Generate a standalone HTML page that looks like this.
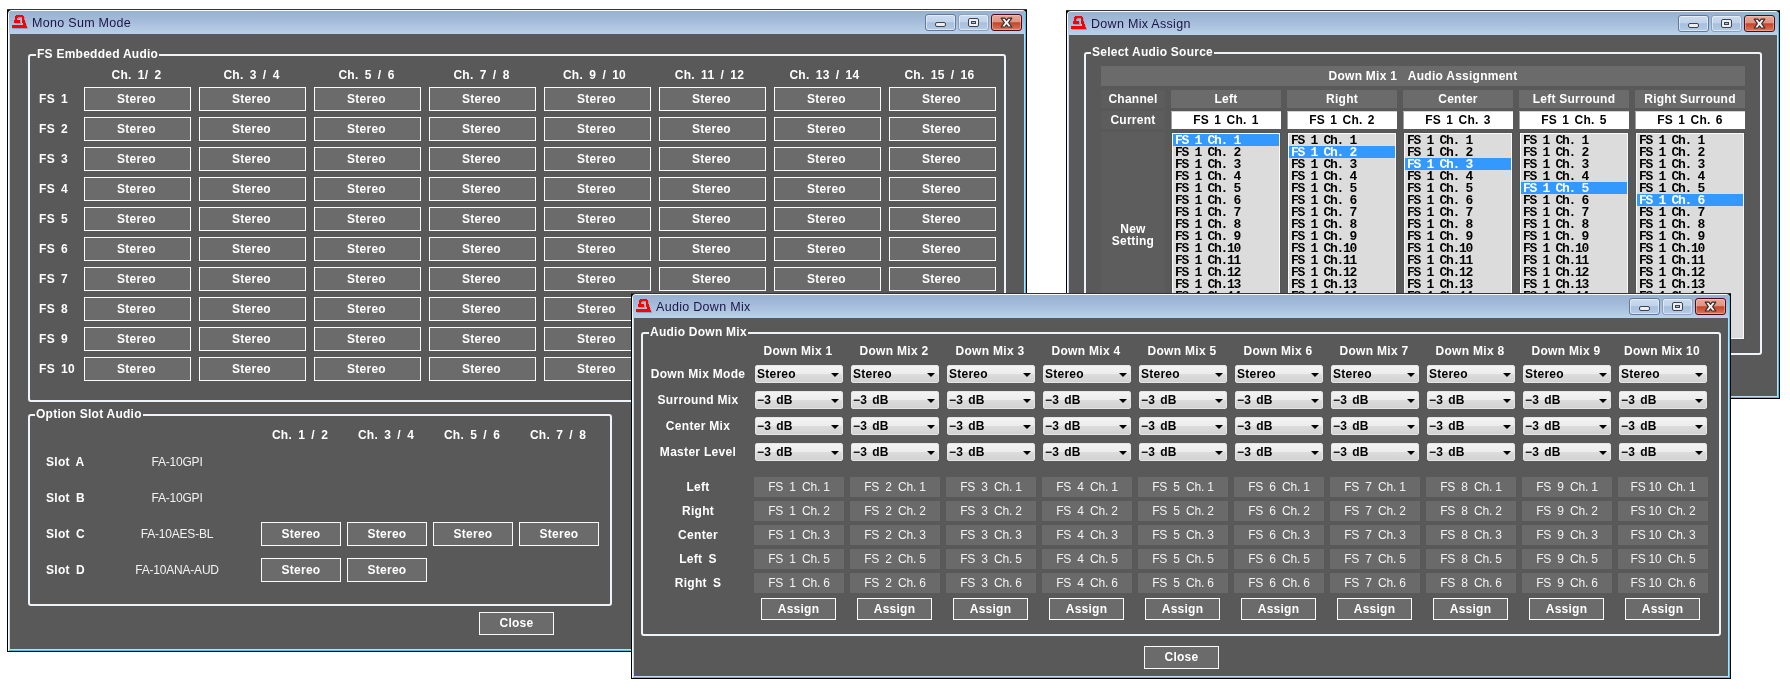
<!DOCTYPE html><html><head><meta charset="utf-8"><style>
html,body{margin:0;padding:0;background:#fff;}
body{width:1790px;height:689px;position:relative;overflow:hidden;font-family:"Liberation Sans",sans-serif;}
div,svg{position:absolute;box-sizing:border-box;}
.b{color:#fff;font-weight:bold;font-size:12px;line-height:14px;height:14px;white-space:nowrap;letter-spacing:0.25px}
.n{color:#f2f2f2;font-size:12px;line-height:14px;height:14px;white-space:nowrap;letter-spacing:-0.2px}
.k{color:#000;font-weight:bold;font-size:12px;line-height:14px;height:14px;white-space:nowrap;letter-spacing:0.25px}
.ch{word-spacing:2.5px;letter-spacing:0.3px}
.title{font-size:12.5px;color:#1c1448;white-space:nowrap;letter-spacing:0.3px;line-height:14px;height:14px}
.gl{background:#595959;color:#fff;font-weight:bold;font-size:12px;line-height:14px;height:14px;white-space:nowrap;padding:0 1px;letter-spacing:0.25px}
.tb{width:31px;height:17px;border-radius:3px;}
.tbmin,.tbmax{border:1px solid #62779a;background:linear-gradient(#cddcee 0%,#c0d3ea 45%,#a7c0dd 52%,#b5cbe5 100%);box-shadow:inset 0 0 0 1px rgba(255,255,255,.5)}
.tbmax{border-color:#8aa0bd}
.tbcls{border:1px solid #4a0c18;background:linear-gradient(#eaa898 0%,#dd9480 45%,#c5452b 52%,#d8775c 100%);box-shadow:inset 0 0 0 1px rgba(255,210,200,.45)}
.gmin{position:absolute;left:9px;top:7px;width:11px;height:5px;background:#eeeeee;border:1px solid #384356;border-radius:2px;box-sizing:border-box}
.gmax{position:absolute;left:9px;top:3px;width:11px;height:9px;background:#eeeeee;border:1px solid #384356;border-radius:2px;box-sizing:border-box}
.gmax:after{content:"";position:absolute;left:2px;top:2px;width:5px;height:3px;background:#a9c0dc;border:1px solid #384356;box-sizing:border-box}
.tbcls svg{left:0;top:0}
.lb{background:#dcdcdc;border:1px solid #555;box-shadow:inset 0 0 0 1px #fafafa;overflow:hidden;padding:1px 1px 0 1px}
.lb p{margin:0;height:12px;line-height:12px;font-family:"Liberation Mono",monospace;font-weight:bold;font-size:13px;letter-spacing:-1.3px;color:#000;padding-left:2px;white-space:nowrap;}
.lb p.sel{background:#3399ff;color:#fff}
.lb p span{display:inline-block;transform:translateY(0.5px);}
.cb{width:88px;height:18px;border:1px solid #e6e6e6;border-radius:2px;background:linear-gradient(#f3f3f3 0%,#ececec 50%,#dcdcdc 52%,#d2d2d2 100%)}
.cb span{position:absolute;left:1px;top:1px;line-height:14px;font-weight:bold;font-size:12px;color:#000;white-space:nowrap;letter-spacing:0.25px;word-spacing:1.5px}
.cb b{position:absolute;left:75px;top:7px;width:0;height:0;border-left:4px solid transparent;border-right:4px solid transparent;border-top:4px solid #000}
</style></head><body><div id="root" style="left:0;top:0;width:1790px;height:689px;will-change:transform">
<div style="left:7px;top:9px;width:1020px;height:643px;background:#000;border-top:1px solid #363636"></div>
<div style="left:8px;top:10px;width:1018px;height:641px;background:#fafcff;border-radius:4px 4px 0 0"></div>
<div style="left:9px;top:11px;width:1017px;height:640px;background:#36c6ee;border-radius:3px 3px 0 0"></div>
<div style="left:9px;top:11px;width:1016px;height:639px;background:#c4daf0;border-radius:3px 3px 0 0"></div>
<div style="left:9px;top:11px;width:1016px;height:23px;background:linear-gradient(#97b1d0 0%,#a5bdda 45%,#b3cae4 80%,#bbd1ea 100%);border-radius:3px 3px 0 0"></div>
<div style="left:10px;top:34px;width:1014px;height:615px;background:#595959"></div>
<svg style="left:12px;top:15px" width="18" height="15" viewBox="0 0 18 15" shape-rendering="crispEdges"><path transform="translate(1,1)" d="M4 0h7v1h-7zM3 1h9v1h-9zM3 2h3v1h-3zM10 2h2v1h-2zM3 3h2v1h-2zM10 3h2v1h-2zM3 4h2v1h-2zM10 4h2v1h-2zM2 5h6v1h-6zM10 5h3v1h-3zM2 6h6v1h-6zM10 6h3v1h-3zM2 7h6v1h-6zM10 7h3v1h-3zM11 8h3v1h-3zM11 9h3v1h-3zM0 10h14v1h-14zM0 11h15v1h-15zM0 12h15v1h-15z" fill="#76909c" opacity="0.6"/><path d="M4 0h7v1h-7zM3 1h9v1h-9zM3 2h3v1h-3zM10 2h2v1h-2zM3 3h2v1h-2zM10 3h2v1h-2zM3 4h2v1h-2zM10 4h2v1h-2zM2 5h6v1h-6zM10 5h3v1h-3zM2 6h6v1h-6zM10 6h3v1h-3zM2 7h6v1h-6zM10 7h3v1h-3zM11 8h3v1h-3zM11 9h3v1h-3zM0 10h14v1h-14zM0 11h15v1h-15zM0 12h15v1h-15z" fill="#ff0000"/></svg>
<div class="title" style="left:32px;top:16px">Mono Sum Mode</div>
<div class="tb tbmin" style="left:925px;top:14px"><i class="gmin"></i></div>
<div class="tb tbmax" style="left:958px;top:14px"><i class="gmax"></i></div>
<div class="tb tbcls" style="left:991px;top:14px"><svg width="31" height="17" viewBox="0 0 31 17"><path d="M9.2 3.2 L12.9 3.2 L14.5 5.3 L16.1 3.2 L19.8 3.2 L16.7 7.6 L19.8 12 L16.1 12 L14.5 9.9 L12.9 12 L9.2 12 L12.3 7.6 Z" fill="#f2f2f2" stroke="#3a2a2a" stroke-width="1.2" stroke-linejoin="round"/></svg></div>
<div style="left:28px;top:54px;width:978px;height:348px;border:2px solid #eef3f8;border-radius:3px"></div>
<div class="gl" style="left:36px;top:47px">FS Embedded Audio</div>
<div class="b ch" style="left:83px;top:68px;width:107px;text-align:center;">Ch. 1/ 2</div>
<div class="b ch" style="left:198px;top:68px;width:107px;text-align:center;">Ch. 3 / 4</div>
<div class="b ch" style="left:313px;top:68px;width:107px;text-align:center;">Ch. 5 / 6</div>
<div class="b ch" style="left:428px;top:68px;width:107px;text-align:center;">Ch. 7 / 8</div>
<div class="b ch" style="left:541px;top:68px;width:107px;text-align:center;">Ch. 9 / 10</div>
<div class="b ch" style="left:656px;top:68px;width:107px;text-align:center;">Ch. 11 / 12</div>
<div class="b ch" style="left:771px;top:68px;width:107px;text-align:center;">Ch. 13 / 14</div>
<div class="b ch" style="left:886px;top:68px;width:107px;text-align:center;">Ch. 15 / 16</div>
<div class="b ch" style="left:39px;top:92px;">FS 1</div>
<div style="left:84px;top:87px;width:107px;height:24px;background:#6b6b6b;border:1px solid #fafafa"></div>
<div class="b" style="left:83px;top:92px;width:107px;text-align:center;">Stereo</div>
<div style="left:199px;top:87px;width:107px;height:24px;background:#6b6b6b;border:1px solid #fafafa"></div>
<div class="b" style="left:198px;top:92px;width:107px;text-align:center;">Stereo</div>
<div style="left:314px;top:87px;width:107px;height:24px;background:#6b6b6b;border:1px solid #fafafa"></div>
<div class="b" style="left:313px;top:92px;width:107px;text-align:center;">Stereo</div>
<div style="left:429px;top:87px;width:107px;height:24px;background:#6b6b6b;border:1px solid #fafafa"></div>
<div class="b" style="left:428px;top:92px;width:107px;text-align:center;">Stereo</div>
<div style="left:544px;top:87px;width:107px;height:24px;background:#6b6b6b;border:1px solid #fafafa"></div>
<div class="b" style="left:543px;top:92px;width:107px;text-align:center;">Stereo</div>
<div style="left:659px;top:87px;width:107px;height:24px;background:#6b6b6b;border:1px solid #fafafa"></div>
<div class="b" style="left:658px;top:92px;width:107px;text-align:center;">Stereo</div>
<div style="left:774px;top:87px;width:107px;height:24px;background:#6b6b6b;border:1px solid #fafafa"></div>
<div class="b" style="left:773px;top:92px;width:107px;text-align:center;">Stereo</div>
<div style="left:889px;top:87px;width:107px;height:24px;background:#6b6b6b;border:1px solid #fafafa"></div>
<div class="b" style="left:888px;top:92px;width:107px;text-align:center;">Stereo</div>
<div class="b ch" style="left:39px;top:122px;">FS 2</div>
<div style="left:84px;top:117px;width:107px;height:24px;background:#6b6b6b;border:1px solid #fafafa"></div>
<div class="b" style="left:83px;top:122px;width:107px;text-align:center;">Stereo</div>
<div style="left:199px;top:117px;width:107px;height:24px;background:#6b6b6b;border:1px solid #fafafa"></div>
<div class="b" style="left:198px;top:122px;width:107px;text-align:center;">Stereo</div>
<div style="left:314px;top:117px;width:107px;height:24px;background:#6b6b6b;border:1px solid #fafafa"></div>
<div class="b" style="left:313px;top:122px;width:107px;text-align:center;">Stereo</div>
<div style="left:429px;top:117px;width:107px;height:24px;background:#6b6b6b;border:1px solid #fafafa"></div>
<div class="b" style="left:428px;top:122px;width:107px;text-align:center;">Stereo</div>
<div style="left:544px;top:117px;width:107px;height:24px;background:#6b6b6b;border:1px solid #fafafa"></div>
<div class="b" style="left:543px;top:122px;width:107px;text-align:center;">Stereo</div>
<div style="left:659px;top:117px;width:107px;height:24px;background:#6b6b6b;border:1px solid #fafafa"></div>
<div class="b" style="left:658px;top:122px;width:107px;text-align:center;">Stereo</div>
<div style="left:774px;top:117px;width:107px;height:24px;background:#6b6b6b;border:1px solid #fafafa"></div>
<div class="b" style="left:773px;top:122px;width:107px;text-align:center;">Stereo</div>
<div style="left:889px;top:117px;width:107px;height:24px;background:#6b6b6b;border:1px solid #fafafa"></div>
<div class="b" style="left:888px;top:122px;width:107px;text-align:center;">Stereo</div>
<div class="b ch" style="left:39px;top:152px;">FS 3</div>
<div style="left:84px;top:147px;width:107px;height:24px;background:#6b6b6b;border:1px solid #fafafa"></div>
<div class="b" style="left:83px;top:152px;width:107px;text-align:center;">Stereo</div>
<div style="left:199px;top:147px;width:107px;height:24px;background:#6b6b6b;border:1px solid #fafafa"></div>
<div class="b" style="left:198px;top:152px;width:107px;text-align:center;">Stereo</div>
<div style="left:314px;top:147px;width:107px;height:24px;background:#6b6b6b;border:1px solid #fafafa"></div>
<div class="b" style="left:313px;top:152px;width:107px;text-align:center;">Stereo</div>
<div style="left:429px;top:147px;width:107px;height:24px;background:#6b6b6b;border:1px solid #fafafa"></div>
<div class="b" style="left:428px;top:152px;width:107px;text-align:center;">Stereo</div>
<div style="left:544px;top:147px;width:107px;height:24px;background:#6b6b6b;border:1px solid #fafafa"></div>
<div class="b" style="left:543px;top:152px;width:107px;text-align:center;">Stereo</div>
<div style="left:659px;top:147px;width:107px;height:24px;background:#6b6b6b;border:1px solid #fafafa"></div>
<div class="b" style="left:658px;top:152px;width:107px;text-align:center;">Stereo</div>
<div style="left:774px;top:147px;width:107px;height:24px;background:#6b6b6b;border:1px solid #fafafa"></div>
<div class="b" style="left:773px;top:152px;width:107px;text-align:center;">Stereo</div>
<div style="left:889px;top:147px;width:107px;height:24px;background:#6b6b6b;border:1px solid #fafafa"></div>
<div class="b" style="left:888px;top:152px;width:107px;text-align:center;">Stereo</div>
<div class="b ch" style="left:39px;top:182px;">FS 4</div>
<div style="left:84px;top:177px;width:107px;height:24px;background:#6b6b6b;border:1px solid #fafafa"></div>
<div class="b" style="left:83px;top:182px;width:107px;text-align:center;">Stereo</div>
<div style="left:199px;top:177px;width:107px;height:24px;background:#6b6b6b;border:1px solid #fafafa"></div>
<div class="b" style="left:198px;top:182px;width:107px;text-align:center;">Stereo</div>
<div style="left:314px;top:177px;width:107px;height:24px;background:#6b6b6b;border:1px solid #fafafa"></div>
<div class="b" style="left:313px;top:182px;width:107px;text-align:center;">Stereo</div>
<div style="left:429px;top:177px;width:107px;height:24px;background:#6b6b6b;border:1px solid #fafafa"></div>
<div class="b" style="left:428px;top:182px;width:107px;text-align:center;">Stereo</div>
<div style="left:544px;top:177px;width:107px;height:24px;background:#6b6b6b;border:1px solid #fafafa"></div>
<div class="b" style="left:543px;top:182px;width:107px;text-align:center;">Stereo</div>
<div style="left:659px;top:177px;width:107px;height:24px;background:#6b6b6b;border:1px solid #fafafa"></div>
<div class="b" style="left:658px;top:182px;width:107px;text-align:center;">Stereo</div>
<div style="left:774px;top:177px;width:107px;height:24px;background:#6b6b6b;border:1px solid #fafafa"></div>
<div class="b" style="left:773px;top:182px;width:107px;text-align:center;">Stereo</div>
<div style="left:889px;top:177px;width:107px;height:24px;background:#6b6b6b;border:1px solid #fafafa"></div>
<div class="b" style="left:888px;top:182px;width:107px;text-align:center;">Stereo</div>
<div class="b ch" style="left:39px;top:212px;">FS 5</div>
<div style="left:84px;top:207px;width:107px;height:24px;background:#6b6b6b;border:1px solid #fafafa"></div>
<div class="b" style="left:83px;top:212px;width:107px;text-align:center;">Stereo</div>
<div style="left:199px;top:207px;width:107px;height:24px;background:#6b6b6b;border:1px solid #fafafa"></div>
<div class="b" style="left:198px;top:212px;width:107px;text-align:center;">Stereo</div>
<div style="left:314px;top:207px;width:107px;height:24px;background:#6b6b6b;border:1px solid #fafafa"></div>
<div class="b" style="left:313px;top:212px;width:107px;text-align:center;">Stereo</div>
<div style="left:429px;top:207px;width:107px;height:24px;background:#6b6b6b;border:1px solid #fafafa"></div>
<div class="b" style="left:428px;top:212px;width:107px;text-align:center;">Stereo</div>
<div style="left:544px;top:207px;width:107px;height:24px;background:#6b6b6b;border:1px solid #fafafa"></div>
<div class="b" style="left:543px;top:212px;width:107px;text-align:center;">Stereo</div>
<div style="left:659px;top:207px;width:107px;height:24px;background:#6b6b6b;border:1px solid #fafafa"></div>
<div class="b" style="left:658px;top:212px;width:107px;text-align:center;">Stereo</div>
<div style="left:774px;top:207px;width:107px;height:24px;background:#6b6b6b;border:1px solid #fafafa"></div>
<div class="b" style="left:773px;top:212px;width:107px;text-align:center;">Stereo</div>
<div style="left:889px;top:207px;width:107px;height:24px;background:#6b6b6b;border:1px solid #fafafa"></div>
<div class="b" style="left:888px;top:212px;width:107px;text-align:center;">Stereo</div>
<div class="b ch" style="left:39px;top:242px;">FS 6</div>
<div style="left:84px;top:237px;width:107px;height:24px;background:#6b6b6b;border:1px solid #fafafa"></div>
<div class="b" style="left:83px;top:242px;width:107px;text-align:center;">Stereo</div>
<div style="left:199px;top:237px;width:107px;height:24px;background:#6b6b6b;border:1px solid #fafafa"></div>
<div class="b" style="left:198px;top:242px;width:107px;text-align:center;">Stereo</div>
<div style="left:314px;top:237px;width:107px;height:24px;background:#6b6b6b;border:1px solid #fafafa"></div>
<div class="b" style="left:313px;top:242px;width:107px;text-align:center;">Stereo</div>
<div style="left:429px;top:237px;width:107px;height:24px;background:#6b6b6b;border:1px solid #fafafa"></div>
<div class="b" style="left:428px;top:242px;width:107px;text-align:center;">Stereo</div>
<div style="left:544px;top:237px;width:107px;height:24px;background:#6b6b6b;border:1px solid #fafafa"></div>
<div class="b" style="left:543px;top:242px;width:107px;text-align:center;">Stereo</div>
<div style="left:659px;top:237px;width:107px;height:24px;background:#6b6b6b;border:1px solid #fafafa"></div>
<div class="b" style="left:658px;top:242px;width:107px;text-align:center;">Stereo</div>
<div style="left:774px;top:237px;width:107px;height:24px;background:#6b6b6b;border:1px solid #fafafa"></div>
<div class="b" style="left:773px;top:242px;width:107px;text-align:center;">Stereo</div>
<div style="left:889px;top:237px;width:107px;height:24px;background:#6b6b6b;border:1px solid #fafafa"></div>
<div class="b" style="left:888px;top:242px;width:107px;text-align:center;">Stereo</div>
<div class="b ch" style="left:39px;top:272px;">FS 7</div>
<div style="left:84px;top:267px;width:107px;height:24px;background:#6b6b6b;border:1px solid #fafafa"></div>
<div class="b" style="left:83px;top:272px;width:107px;text-align:center;">Stereo</div>
<div style="left:199px;top:267px;width:107px;height:24px;background:#6b6b6b;border:1px solid #fafafa"></div>
<div class="b" style="left:198px;top:272px;width:107px;text-align:center;">Stereo</div>
<div style="left:314px;top:267px;width:107px;height:24px;background:#6b6b6b;border:1px solid #fafafa"></div>
<div class="b" style="left:313px;top:272px;width:107px;text-align:center;">Stereo</div>
<div style="left:429px;top:267px;width:107px;height:24px;background:#6b6b6b;border:1px solid #fafafa"></div>
<div class="b" style="left:428px;top:272px;width:107px;text-align:center;">Stereo</div>
<div style="left:544px;top:267px;width:107px;height:24px;background:#6b6b6b;border:1px solid #fafafa"></div>
<div class="b" style="left:543px;top:272px;width:107px;text-align:center;">Stereo</div>
<div style="left:659px;top:267px;width:107px;height:24px;background:#6b6b6b;border:1px solid #fafafa"></div>
<div class="b" style="left:658px;top:272px;width:107px;text-align:center;">Stereo</div>
<div style="left:774px;top:267px;width:107px;height:24px;background:#6b6b6b;border:1px solid #fafafa"></div>
<div class="b" style="left:773px;top:272px;width:107px;text-align:center;">Stereo</div>
<div style="left:889px;top:267px;width:107px;height:24px;background:#6b6b6b;border:1px solid #fafafa"></div>
<div class="b" style="left:888px;top:272px;width:107px;text-align:center;">Stereo</div>
<div class="b ch" style="left:39px;top:302px;">FS 8</div>
<div style="left:84px;top:297px;width:107px;height:24px;background:#6b6b6b;border:1px solid #fafafa"></div>
<div class="b" style="left:83px;top:302px;width:107px;text-align:center;">Stereo</div>
<div style="left:199px;top:297px;width:107px;height:24px;background:#6b6b6b;border:1px solid #fafafa"></div>
<div class="b" style="left:198px;top:302px;width:107px;text-align:center;">Stereo</div>
<div style="left:314px;top:297px;width:107px;height:24px;background:#6b6b6b;border:1px solid #fafafa"></div>
<div class="b" style="left:313px;top:302px;width:107px;text-align:center;">Stereo</div>
<div style="left:429px;top:297px;width:107px;height:24px;background:#6b6b6b;border:1px solid #fafafa"></div>
<div class="b" style="left:428px;top:302px;width:107px;text-align:center;">Stereo</div>
<div style="left:544px;top:297px;width:107px;height:24px;background:#6b6b6b;border:1px solid #fafafa"></div>
<div class="b" style="left:543px;top:302px;width:107px;text-align:center;">Stereo</div>
<div style="left:659px;top:297px;width:107px;height:24px;background:#6b6b6b;border:1px solid #fafafa"></div>
<div class="b" style="left:658px;top:302px;width:107px;text-align:center;">Stereo</div>
<div style="left:774px;top:297px;width:107px;height:24px;background:#6b6b6b;border:1px solid #fafafa"></div>
<div class="b" style="left:773px;top:302px;width:107px;text-align:center;">Stereo</div>
<div style="left:889px;top:297px;width:107px;height:24px;background:#6b6b6b;border:1px solid #fafafa"></div>
<div class="b" style="left:888px;top:302px;width:107px;text-align:center;">Stereo</div>
<div class="b ch" style="left:39px;top:332px;">FS 9</div>
<div style="left:84px;top:327px;width:107px;height:24px;background:#6b6b6b;border:1px solid #fafafa"></div>
<div class="b" style="left:83px;top:332px;width:107px;text-align:center;">Stereo</div>
<div style="left:199px;top:327px;width:107px;height:24px;background:#6b6b6b;border:1px solid #fafafa"></div>
<div class="b" style="left:198px;top:332px;width:107px;text-align:center;">Stereo</div>
<div style="left:314px;top:327px;width:107px;height:24px;background:#6b6b6b;border:1px solid #fafafa"></div>
<div class="b" style="left:313px;top:332px;width:107px;text-align:center;">Stereo</div>
<div style="left:429px;top:327px;width:107px;height:24px;background:#6b6b6b;border:1px solid #fafafa"></div>
<div class="b" style="left:428px;top:332px;width:107px;text-align:center;">Stereo</div>
<div style="left:544px;top:327px;width:107px;height:24px;background:#6b6b6b;border:1px solid #fafafa"></div>
<div class="b" style="left:543px;top:332px;width:107px;text-align:center;">Stereo</div>
<div style="left:659px;top:327px;width:107px;height:24px;background:#6b6b6b;border:1px solid #fafafa"></div>
<div class="b" style="left:658px;top:332px;width:107px;text-align:center;">Stereo</div>
<div style="left:774px;top:327px;width:107px;height:24px;background:#6b6b6b;border:1px solid #fafafa"></div>
<div class="b" style="left:773px;top:332px;width:107px;text-align:center;">Stereo</div>
<div style="left:889px;top:327px;width:107px;height:24px;background:#6b6b6b;border:1px solid #fafafa"></div>
<div class="b" style="left:888px;top:332px;width:107px;text-align:center;">Stereo</div>
<div class="b ch" style="left:39px;top:362px;">FS 10</div>
<div style="left:84px;top:357px;width:107px;height:24px;background:#6b6b6b;border:1px solid #fafafa"></div>
<div class="b" style="left:83px;top:362px;width:107px;text-align:center;">Stereo</div>
<div style="left:199px;top:357px;width:107px;height:24px;background:#6b6b6b;border:1px solid #fafafa"></div>
<div class="b" style="left:198px;top:362px;width:107px;text-align:center;">Stereo</div>
<div style="left:314px;top:357px;width:107px;height:24px;background:#6b6b6b;border:1px solid #fafafa"></div>
<div class="b" style="left:313px;top:362px;width:107px;text-align:center;">Stereo</div>
<div style="left:429px;top:357px;width:107px;height:24px;background:#6b6b6b;border:1px solid #fafafa"></div>
<div class="b" style="left:428px;top:362px;width:107px;text-align:center;">Stereo</div>
<div style="left:544px;top:357px;width:107px;height:24px;background:#6b6b6b;border:1px solid #fafafa"></div>
<div class="b" style="left:543px;top:362px;width:107px;text-align:center;">Stereo</div>
<div style="left:659px;top:357px;width:107px;height:24px;background:#6b6b6b;border:1px solid #fafafa"></div>
<div class="b" style="left:658px;top:362px;width:107px;text-align:center;">Stereo</div>
<div style="left:774px;top:357px;width:107px;height:24px;background:#6b6b6b;border:1px solid #fafafa"></div>
<div class="b" style="left:773px;top:362px;width:107px;text-align:center;">Stereo</div>
<div style="left:889px;top:357px;width:107px;height:24px;background:#6b6b6b;border:1px solid #fafafa"></div>
<div class="b" style="left:888px;top:362px;width:107px;text-align:center;">Stereo</div>
<div style="left:28px;top:414px;width:584px;height:192px;border:2px solid #eef3f8;border-radius:3px"></div>
<div class="gl" style="left:35px;top:407px">Option Slot Audio</div>
<div class="b ch" style="left:260px;top:428px;width:80px;text-align:center;">Ch. 1 / 2</div>
<div class="b ch" style="left:346px;top:428px;width:80px;text-align:center;">Ch. 3 / 4</div>
<div class="b ch" style="left:432px;top:428px;width:80px;text-align:center;">Ch. 5 / 6</div>
<div class="b ch" style="left:518px;top:428px;width:80px;text-align:center;">Ch. 7 / 8</div>
<div class="b ch" style="left:46px;top:455px;">Slot A</div>
<div class="n" style="left:117px;top:455px;width:120px;text-align:center;">FA-10GPI</div>
<div class="b ch" style="left:46px;top:491px;">Slot B</div>
<div class="n" style="left:117px;top:491px;width:120px;text-align:center;">FA-10GPI</div>
<div class="b ch" style="left:46px;top:527px;">Slot C</div>
<div class="n" style="left:117px;top:527px;width:120px;text-align:center;">FA-10AES-BL</div>
<div style="left:261px;top:522px;width:80px;height:24px;background:#6b6b6b;border:1px solid #fafafa"></div>
<div class="b" style="left:261px;top:527px;width:80px;text-align:center;">Stereo</div>
<div style="left:347px;top:522px;width:80px;height:24px;background:#6b6b6b;border:1px solid #fafafa"></div>
<div class="b" style="left:347px;top:527px;width:80px;text-align:center;">Stereo</div>
<div style="left:433px;top:522px;width:80px;height:24px;background:#6b6b6b;border:1px solid #fafafa"></div>
<div class="b" style="left:433px;top:527px;width:80px;text-align:center;">Stereo</div>
<div style="left:519px;top:522px;width:80px;height:24px;background:#6b6b6b;border:1px solid #fafafa"></div>
<div class="b" style="left:519px;top:527px;width:80px;text-align:center;">Stereo</div>
<div class="b ch" style="left:46px;top:563px;">Slot D</div>
<div class="n" style="left:117px;top:563px;width:120px;text-align:center;">FA-10ANA-AUD</div>
<div style="left:261px;top:558px;width:80px;height:24px;background:#6b6b6b;border:1px solid #fafafa"></div>
<div class="b" style="left:261px;top:563px;width:80px;text-align:center;">Stereo</div>
<div style="left:347px;top:558px;width:80px;height:24px;background:#6b6b6b;border:1px solid #fafafa"></div>
<div class="b" style="left:347px;top:563px;width:80px;text-align:center;">Stereo</div>
<div style="left:479px;top:612px;width:75px;height:23px;background:#6b6b6b;border:1px solid #fafafa"></div>
<div class="b" style="left:479px;top:616px;width:75px;text-align:center;">Close</div>
<div style="left:1066px;top:10px;width:714px;height:389px;background:#000;border-top:1px solid #363636"></div>
<div style="left:1067px;top:11px;width:712px;height:387px;background:#fafcff;border-radius:4px 4px 0 0"></div>
<div style="left:1068px;top:12px;width:711px;height:386px;background:#36c6ee;border-radius:3px 3px 0 0"></div>
<div style="left:1068px;top:12px;width:710px;height:385px;background:#c4daf0;border-radius:3px 3px 0 0"></div>
<div style="left:1068px;top:12px;width:710px;height:23px;background:linear-gradient(#97b1d0 0%,#a5bdda 45%,#b3cae4 80%,#bbd1ea 100%);border-radius:3px 3px 0 0"></div>
<div style="left:1069px;top:35px;width:708px;height:361px;background:#595959"></div>
<svg style="left:1071px;top:16px" width="18" height="15" viewBox="0 0 18 15" shape-rendering="crispEdges"><path transform="translate(1,1)" d="M4 0h7v1h-7zM3 1h9v1h-9zM3 2h3v1h-3zM10 2h2v1h-2zM3 3h2v1h-2zM10 3h2v1h-2zM3 4h2v1h-2zM10 4h2v1h-2zM2 5h6v1h-6zM10 5h3v1h-3zM2 6h6v1h-6zM10 6h3v1h-3zM2 7h6v1h-6zM10 7h3v1h-3zM11 8h3v1h-3zM11 9h3v1h-3zM0 10h14v1h-14zM0 11h15v1h-15zM0 12h15v1h-15z" fill="#76909c" opacity="0.6"/><path d="M4 0h7v1h-7zM3 1h9v1h-9zM3 2h3v1h-3zM10 2h2v1h-2zM3 3h2v1h-2zM10 3h2v1h-2zM3 4h2v1h-2zM10 4h2v1h-2zM2 5h6v1h-6zM10 5h3v1h-3zM2 6h6v1h-6zM10 6h3v1h-3zM2 7h6v1h-6zM10 7h3v1h-3zM11 8h3v1h-3zM11 9h3v1h-3zM0 10h14v1h-14zM0 11h15v1h-15zM0 12h15v1h-15z" fill="#ff0000"/></svg>
<div class="title" style="left:1091px;top:17px">Down Mix Assign</div>
<div class="tb tbmin" style="left:1678px;top:15px"><i class="gmin"></i></div>
<div class="tb tbmax" style="left:1711px;top:15px"><i class="gmax"></i></div>
<div class="tb tbcls" style="left:1744px;top:15px"><svg width="31" height="17" viewBox="0 0 31 17"><path d="M9.2 3.2 L12.9 3.2 L14.5 5.3 L16.1 3.2 L19.8 3.2 L16.7 7.6 L19.8 12 L16.1 12 L14.5 9.9 L12.9 12 L9.2 12 L12.3 7.6 Z" fill="#f2f2f2" stroke="#3a2a2a" stroke-width="1.2" stroke-linejoin="round"/></svg></div>
<div style="left:1084px;top:52px;width:678px;height:303px;border:2px solid #eef3f8;border-radius:3px"></div>
<div class="gl" style="left:1091px;top:45px">Select Audio Source</div>
<div style="left:1101px;top:66px;width:644px;height:20px;background:#6b6b6b"></div>
<div class="b" style="left:1101px;top:69px;width:644px;text-align:center;">Down Mix 1&nbsp;&nbsp;&nbsp;Audio Assignment</div>
<div style="left:1101px;top:90px;width:64px;height:18px;background:#5d5d5d"></div>
<div class="b" style="left:1101px;top:92px;width:64px;text-align:center;">Channel</div>
<div style="left:1101px;top:111px;width:64px;height:18px;background:#5d5d5d"></div>
<div class="b" style="left:1101px;top:113px;width:64px;text-align:center;">Current</div>
<div style="left:1101px;top:132px;width:64px;height:240px;background:#5d5d5d"></div>
<div class="b" style="left:1101px;top:223px;width:64px;text-align:center;line-height:12px;height:26px">New<br>Setting</div>
<div style="left:1171px;top:90px;width:110px;height:18px;background:#6b6b6b"></div>
<div class="b" style="left:1171px;top:92px;width:110px;text-align:center;">Left</div>
<div style="left:1171px;top:111px;width:110px;height:18px;background:#fff;border-left:1px solid #a0a0a0;border-top:1px solid #d0d0d0"></div>
<div class="k ch" style="left:1171px;top:113px;width:110px;text-align:center;word-spacing:1.5px">FS 1 Ch. 1</div>
<div class="lb" style="left:1171px;top:132px;width:110px;height:208px"><p class="sel"><span>FS 1 Ch. 1</span></p><p><span>FS 1 Ch. 2</span></p><p><span>FS 1 Ch. 3</span></p><p><span>FS 1 Ch. 4</span></p><p><span>FS 1 Ch. 5</span></p><p><span>FS 1 Ch. 6</span></p><p><span>FS 1 Ch. 7</span></p><p><span>FS 1 Ch. 8</span></p><p><span>FS 1 Ch. 9</span></p><p><span>FS 1 Ch.10</span></p><p><span>FS 1 Ch.11</span></p><p><span>FS 1 Ch.12</span></p><p><span>FS 1 Ch.13</span></p><p><span>FS 1 Ch.14</span></p><p><span>FS 1 Ch.15</span></p><p><span>FS 1 Ch.16</span></p></div>
<div style="left:1287px;top:90px;width:110px;height:18px;background:#6b6b6b"></div>
<div class="b" style="left:1287px;top:92px;width:110px;text-align:center;">Right</div>
<div style="left:1287px;top:111px;width:110px;height:18px;background:#fff;border-left:1px solid #a0a0a0;border-top:1px solid #d0d0d0"></div>
<div class="k ch" style="left:1287px;top:113px;width:110px;text-align:center;word-spacing:1.5px">FS 1 Ch. 2</div>
<div class="lb" style="left:1287px;top:132px;width:110px;height:208px"><p><span>FS 1 Ch. 1</span></p><p class="sel"><span>FS 1 Ch. 2</span></p><p><span>FS 1 Ch. 3</span></p><p><span>FS 1 Ch. 4</span></p><p><span>FS 1 Ch. 5</span></p><p><span>FS 1 Ch. 6</span></p><p><span>FS 1 Ch. 7</span></p><p><span>FS 1 Ch. 8</span></p><p><span>FS 1 Ch. 9</span></p><p><span>FS 1 Ch.10</span></p><p><span>FS 1 Ch.11</span></p><p><span>FS 1 Ch.12</span></p><p><span>FS 1 Ch.13</span></p><p><span>FS 1 Ch.14</span></p><p><span>FS 1 Ch.15</span></p><p><span>FS 1 Ch.16</span></p></div>
<div style="left:1403px;top:90px;width:110px;height:18px;background:#6b6b6b"></div>
<div class="b" style="left:1403px;top:92px;width:110px;text-align:center;">Center</div>
<div style="left:1403px;top:111px;width:110px;height:18px;background:#fff;border-left:1px solid #a0a0a0;border-top:1px solid #d0d0d0"></div>
<div class="k ch" style="left:1403px;top:113px;width:110px;text-align:center;word-spacing:1.5px">FS 1 Ch. 3</div>
<div class="lb" style="left:1403px;top:132px;width:110px;height:208px"><p><span>FS 1 Ch. 1</span></p><p><span>FS 1 Ch. 2</span></p><p class="sel"><span>FS 1 Ch. 3</span></p><p><span>FS 1 Ch. 4</span></p><p><span>FS 1 Ch. 5</span></p><p><span>FS 1 Ch. 6</span></p><p><span>FS 1 Ch. 7</span></p><p><span>FS 1 Ch. 8</span></p><p><span>FS 1 Ch. 9</span></p><p><span>FS 1 Ch.10</span></p><p><span>FS 1 Ch.11</span></p><p><span>FS 1 Ch.12</span></p><p><span>FS 1 Ch.13</span></p><p><span>FS 1 Ch.14</span></p><p><span>FS 1 Ch.15</span></p><p><span>FS 1 Ch.16</span></p></div>
<div style="left:1519px;top:90px;width:110px;height:18px;background:#6b6b6b"></div>
<div class="b" style="left:1519px;top:92px;width:110px;text-align:center;">Left Surround</div>
<div style="left:1519px;top:111px;width:110px;height:18px;background:#fff;border-left:1px solid #a0a0a0;border-top:1px solid #d0d0d0"></div>
<div class="k ch" style="left:1519px;top:113px;width:110px;text-align:center;word-spacing:1.5px">FS 1 Ch. 5</div>
<div class="lb" style="left:1519px;top:132px;width:110px;height:208px"><p><span>FS 1 Ch. 1</span></p><p><span>FS 1 Ch. 2</span></p><p><span>FS 1 Ch. 3</span></p><p><span>FS 1 Ch. 4</span></p><p class="sel"><span>FS 1 Ch. 5</span></p><p><span>FS 1 Ch. 6</span></p><p><span>FS 1 Ch. 7</span></p><p><span>FS 1 Ch. 8</span></p><p><span>FS 1 Ch. 9</span></p><p><span>FS 1 Ch.10</span></p><p><span>FS 1 Ch.11</span></p><p><span>FS 1 Ch.12</span></p><p><span>FS 1 Ch.13</span></p><p><span>FS 1 Ch.14</span></p><p><span>FS 1 Ch.15</span></p><p><span>FS 1 Ch.16</span></p></div>
<div style="left:1635px;top:90px;width:110px;height:18px;background:#6b6b6b"></div>
<div class="b" style="left:1635px;top:92px;width:110px;text-align:center;">Right Surround</div>
<div style="left:1635px;top:111px;width:110px;height:18px;background:#fff;border-left:1px solid #a0a0a0;border-top:1px solid #d0d0d0"></div>
<div class="k ch" style="left:1635px;top:113px;width:110px;text-align:center;word-spacing:1.5px">FS 1 Ch. 6</div>
<div class="lb" style="left:1635px;top:132px;width:110px;height:208px"><p><span>FS 1 Ch. 1</span></p><p><span>FS 1 Ch. 2</span></p><p><span>FS 1 Ch. 3</span></p><p><span>FS 1 Ch. 4</span></p><p><span>FS 1 Ch. 5</span></p><p class="sel"><span>FS 1 Ch. 6</span></p><p><span>FS 1 Ch. 7</span></p><p><span>FS 1 Ch. 8</span></p><p><span>FS 1 Ch. 9</span></p><p><span>FS 1 Ch.10</span></p><p><span>FS 1 Ch.11</span></p><p><span>FS 1 Ch.12</span></p><p><span>FS 1 Ch.13</span></p><p><span>FS 1 Ch.14</span></p><p><span>FS 1 Ch.15</span></p><p><span>FS 1 Ch.16</span></p></div>
<div style="left:631px;top:293px;width:1100px;height:386px;background:#000;border-top:1px solid #363636"></div>
<div style="left:632px;top:294px;width:1098px;height:384px;background:#fafcff;border-radius:4px 4px 0 0"></div>
<div style="left:633px;top:295px;width:1097px;height:383px;background:#36c6ee;border-radius:3px 3px 0 0"></div>
<div style="left:633px;top:295px;width:1096px;height:382px;background:#c4daf0;border-radius:3px 3px 0 0"></div>
<div style="left:633px;top:295px;width:1096px;height:23px;background:linear-gradient(#97b1d0 0%,#a5bdda 45%,#b3cae4 80%,#bbd1ea 100%);border-radius:3px 3px 0 0"></div>
<div style="left:634px;top:318px;width:1094px;height:358px;background:#595959"></div>
<svg style="left:636px;top:299px" width="18" height="15" viewBox="0 0 18 15" shape-rendering="crispEdges"><path transform="translate(1,1)" d="M4 0h7v1h-7zM3 1h9v1h-9zM3 2h3v1h-3zM10 2h2v1h-2zM3 3h2v1h-2zM10 3h2v1h-2zM3 4h2v1h-2zM10 4h2v1h-2zM2 5h6v1h-6zM10 5h3v1h-3zM2 6h6v1h-6zM10 6h3v1h-3zM2 7h6v1h-6zM10 7h3v1h-3zM11 8h3v1h-3zM11 9h3v1h-3zM0 10h14v1h-14zM0 11h15v1h-15zM0 12h15v1h-15z" fill="#76909c" opacity="0.6"/><path d="M4 0h7v1h-7zM3 1h9v1h-9zM3 2h3v1h-3zM10 2h2v1h-2zM3 3h2v1h-2zM10 3h2v1h-2zM3 4h2v1h-2zM10 4h2v1h-2zM2 5h6v1h-6zM10 5h3v1h-3zM2 6h6v1h-6zM10 6h3v1h-3zM2 7h6v1h-6zM10 7h3v1h-3zM11 8h3v1h-3zM11 9h3v1h-3zM0 10h14v1h-14zM0 11h15v1h-15zM0 12h15v1h-15z" fill="#ff0000"/></svg>
<div class="title" style="left:656px;top:300px">Audio Down Mix</div>
<div class="tb tbmin" style="left:1629px;top:298px"><i class="gmin"></i></div>
<div class="tb tbmax" style="left:1662px;top:298px"><i class="gmax"></i></div>
<div class="tb tbcls" style="left:1695px;top:298px"><svg width="31" height="17" viewBox="0 0 31 17"><path d="M9.2 3.2 L12.9 3.2 L14.5 5.3 L16.1 3.2 L19.8 3.2 L16.7 7.6 L19.8 12 L16.1 12 L14.5 9.9 L12.9 12 L9.2 12 L12.3 7.6 Z" fill="#f2f2f2" stroke="#3a2a2a" stroke-width="1.2" stroke-linejoin="round"/></svg></div>
<div style="left:641px;top:332px;width:1080px;height:304px;border:2px solid #eef3f8;border-radius:3px"></div>
<div class="gl" style="left:649px;top:325px">Audio Down Mix</div>
<div class="b" style="left:744px;top:344px;width:108px;text-align:center;letter-spacing:0.3px">Down Mix 1</div>
<div class="b" style="left:840px;top:344px;width:108px;text-align:center;letter-spacing:0.3px">Down Mix 2</div>
<div class="b" style="left:936px;top:344px;width:108px;text-align:center;letter-spacing:0.3px">Down Mix 3</div>
<div class="b" style="left:1032px;top:344px;width:108px;text-align:center;letter-spacing:0.3px">Down Mix 4</div>
<div class="b" style="left:1128px;top:344px;width:108px;text-align:center;letter-spacing:0.3px">Down Mix 5</div>
<div class="b" style="left:1224px;top:344px;width:108px;text-align:center;letter-spacing:0.3px">Down Mix 6</div>
<div class="b" style="left:1320px;top:344px;width:108px;text-align:center;letter-spacing:0.3px">Down Mix 7</div>
<div class="b" style="left:1416px;top:344px;width:108px;text-align:center;letter-spacing:0.3px">Down Mix 8</div>
<div class="b" style="left:1512px;top:344px;width:108px;text-align:center;letter-spacing:0.3px">Down Mix 9</div>
<div class="b" style="left:1608px;top:344px;width:108px;text-align:center;letter-spacing:0.3px">Down Mix 10</div>
<div class="b" style="left:644px;top:367px;width:108px;text-align:center;letter-spacing:0.3px">Down Mix Mode</div>
<div class="cb" style="left:755px;top:365px"><span>Stereo</span><b></b></div>
<div class="cb" style="left:851px;top:365px"><span>Stereo</span><b></b></div>
<div class="cb" style="left:947px;top:365px"><span>Stereo</span><b></b></div>
<div class="cb" style="left:1043px;top:365px"><span>Stereo</span><b></b></div>
<div class="cb" style="left:1139px;top:365px"><span>Stereo</span><b></b></div>
<div class="cb" style="left:1235px;top:365px"><span>Stereo</span><b></b></div>
<div class="cb" style="left:1331px;top:365px"><span>Stereo</span><b></b></div>
<div class="cb" style="left:1427px;top:365px"><span>Stereo</span><b></b></div>
<div class="cb" style="left:1523px;top:365px"><span>Stereo</span><b></b></div>
<div class="cb" style="left:1619px;top:365px"><span>Stereo</span><b></b></div>
<div class="b" style="left:644px;top:393px;width:108px;text-align:center;letter-spacing:0.3px">Surround Mix</div>
<div class="cb" style="left:755px;top:391px"><span>&minus;3 dB</span><b></b></div>
<div class="cb" style="left:851px;top:391px"><span>&minus;3 dB</span><b></b></div>
<div class="cb" style="left:947px;top:391px"><span>&minus;3 dB</span><b></b></div>
<div class="cb" style="left:1043px;top:391px"><span>&minus;3 dB</span><b></b></div>
<div class="cb" style="left:1139px;top:391px"><span>&minus;3 dB</span><b></b></div>
<div class="cb" style="left:1235px;top:391px"><span>&minus;3 dB</span><b></b></div>
<div class="cb" style="left:1331px;top:391px"><span>&minus;3 dB</span><b></b></div>
<div class="cb" style="left:1427px;top:391px"><span>&minus;3 dB</span><b></b></div>
<div class="cb" style="left:1523px;top:391px"><span>&minus;3 dB</span><b></b></div>
<div class="cb" style="left:1619px;top:391px"><span>&minus;3 dB</span><b></b></div>
<div class="b" style="left:644px;top:419px;width:108px;text-align:center;letter-spacing:0.3px">Center Mix</div>
<div class="cb" style="left:755px;top:417px"><span>&minus;3 dB</span><b></b></div>
<div class="cb" style="left:851px;top:417px"><span>&minus;3 dB</span><b></b></div>
<div class="cb" style="left:947px;top:417px"><span>&minus;3 dB</span><b></b></div>
<div class="cb" style="left:1043px;top:417px"><span>&minus;3 dB</span><b></b></div>
<div class="cb" style="left:1139px;top:417px"><span>&minus;3 dB</span><b></b></div>
<div class="cb" style="left:1235px;top:417px"><span>&minus;3 dB</span><b></b></div>
<div class="cb" style="left:1331px;top:417px"><span>&minus;3 dB</span><b></b></div>
<div class="cb" style="left:1427px;top:417px"><span>&minus;3 dB</span><b></b></div>
<div class="cb" style="left:1523px;top:417px"><span>&minus;3 dB</span><b></b></div>
<div class="cb" style="left:1619px;top:417px"><span>&minus;3 dB</span><b></b></div>
<div class="b" style="left:644px;top:445px;width:108px;text-align:center;letter-spacing:0.3px">Master Level</div>
<div class="cb" style="left:755px;top:443px"><span>&minus;3 dB</span><b></b></div>
<div class="cb" style="left:851px;top:443px"><span>&minus;3 dB</span><b></b></div>
<div class="cb" style="left:947px;top:443px"><span>&minus;3 dB</span><b></b></div>
<div class="cb" style="left:1043px;top:443px"><span>&minus;3 dB</span><b></b></div>
<div class="cb" style="left:1139px;top:443px"><span>&minus;3 dB</span><b></b></div>
<div class="cb" style="left:1235px;top:443px"><span>&minus;3 dB</span><b></b></div>
<div class="cb" style="left:1331px;top:443px"><span>&minus;3 dB</span><b></b></div>
<div class="cb" style="left:1427px;top:443px"><span>&minus;3 dB</span><b></b></div>
<div class="cb" style="left:1523px;top:443px"><span>&minus;3 dB</span><b></b></div>
<div class="cb" style="left:1619px;top:443px"><span>&minus;3 dB</span><b></b></div>
<div class="b ch" style="left:644px;top:480px;width:108px;text-align:center;">Left</div>
<div style="left:754px;top:477px;width:90px;height:20px;background:#6a6a6a"></div>
<div class="n" style="left:754px;top:480px;width:90px;text-align:center;">FS&nbsp;&nbsp;1&nbsp;&nbsp;Ch.&nbsp;1</div>
<div style="left:850px;top:477px;width:90px;height:20px;background:#6a6a6a"></div>
<div class="n" style="left:850px;top:480px;width:90px;text-align:center;">FS&nbsp;&nbsp;2&nbsp;&nbsp;Ch.&nbsp;1</div>
<div style="left:946px;top:477px;width:90px;height:20px;background:#6a6a6a"></div>
<div class="n" style="left:946px;top:480px;width:90px;text-align:center;">FS&nbsp;&nbsp;3&nbsp;&nbsp;Ch.&nbsp;1</div>
<div style="left:1042px;top:477px;width:90px;height:20px;background:#6a6a6a"></div>
<div class="n" style="left:1042px;top:480px;width:90px;text-align:center;">FS&nbsp;&nbsp;4&nbsp;&nbsp;Ch.&nbsp;1</div>
<div style="left:1138px;top:477px;width:90px;height:20px;background:#6a6a6a"></div>
<div class="n" style="left:1138px;top:480px;width:90px;text-align:center;">FS&nbsp;&nbsp;5&nbsp;&nbsp;Ch.&nbsp;1</div>
<div style="left:1234px;top:477px;width:90px;height:20px;background:#6a6a6a"></div>
<div class="n" style="left:1234px;top:480px;width:90px;text-align:center;">FS&nbsp;&nbsp;6&nbsp;&nbsp;Ch.&nbsp;1</div>
<div style="left:1330px;top:477px;width:90px;height:20px;background:#6a6a6a"></div>
<div class="n" style="left:1330px;top:480px;width:90px;text-align:center;">FS&nbsp;&nbsp;7&nbsp;&nbsp;Ch.&nbsp;1</div>
<div style="left:1426px;top:477px;width:90px;height:20px;background:#6a6a6a"></div>
<div class="n" style="left:1426px;top:480px;width:90px;text-align:center;">FS&nbsp;&nbsp;8&nbsp;&nbsp;Ch.&nbsp;1</div>
<div style="left:1522px;top:477px;width:90px;height:20px;background:#6a6a6a"></div>
<div class="n" style="left:1522px;top:480px;width:90px;text-align:center;">FS&nbsp;&nbsp;9&nbsp;&nbsp;Ch.&nbsp;1</div>
<div style="left:1618px;top:477px;width:90px;height:20px;background:#6a6a6a"></div>
<div class="n" style="left:1618px;top:480px;width:90px;text-align:center;">FS&nbsp;10&nbsp;&nbsp;Ch.&nbsp;1</div>
<div class="b ch" style="left:644px;top:504px;width:108px;text-align:center;">Right</div>
<div style="left:754px;top:501px;width:90px;height:20px;background:#6a6a6a"></div>
<div class="n" style="left:754px;top:504px;width:90px;text-align:center;">FS&nbsp;&nbsp;1&nbsp;&nbsp;Ch.&nbsp;2</div>
<div style="left:850px;top:501px;width:90px;height:20px;background:#6a6a6a"></div>
<div class="n" style="left:850px;top:504px;width:90px;text-align:center;">FS&nbsp;&nbsp;2&nbsp;&nbsp;Ch.&nbsp;2</div>
<div style="left:946px;top:501px;width:90px;height:20px;background:#6a6a6a"></div>
<div class="n" style="left:946px;top:504px;width:90px;text-align:center;">FS&nbsp;&nbsp;3&nbsp;&nbsp;Ch.&nbsp;2</div>
<div style="left:1042px;top:501px;width:90px;height:20px;background:#6a6a6a"></div>
<div class="n" style="left:1042px;top:504px;width:90px;text-align:center;">FS&nbsp;&nbsp;4&nbsp;&nbsp;Ch.&nbsp;2</div>
<div style="left:1138px;top:501px;width:90px;height:20px;background:#6a6a6a"></div>
<div class="n" style="left:1138px;top:504px;width:90px;text-align:center;">FS&nbsp;&nbsp;5&nbsp;&nbsp;Ch.&nbsp;2</div>
<div style="left:1234px;top:501px;width:90px;height:20px;background:#6a6a6a"></div>
<div class="n" style="left:1234px;top:504px;width:90px;text-align:center;">FS&nbsp;&nbsp;6&nbsp;&nbsp;Ch.&nbsp;2</div>
<div style="left:1330px;top:501px;width:90px;height:20px;background:#6a6a6a"></div>
<div class="n" style="left:1330px;top:504px;width:90px;text-align:center;">FS&nbsp;&nbsp;7&nbsp;&nbsp;Ch.&nbsp;2</div>
<div style="left:1426px;top:501px;width:90px;height:20px;background:#6a6a6a"></div>
<div class="n" style="left:1426px;top:504px;width:90px;text-align:center;">FS&nbsp;&nbsp;8&nbsp;&nbsp;Ch.&nbsp;2</div>
<div style="left:1522px;top:501px;width:90px;height:20px;background:#6a6a6a"></div>
<div class="n" style="left:1522px;top:504px;width:90px;text-align:center;">FS&nbsp;&nbsp;9&nbsp;&nbsp;Ch.&nbsp;2</div>
<div style="left:1618px;top:501px;width:90px;height:20px;background:#6a6a6a"></div>
<div class="n" style="left:1618px;top:504px;width:90px;text-align:center;">FS&nbsp;10&nbsp;&nbsp;Ch.&nbsp;2</div>
<div class="b ch" style="left:644px;top:528px;width:108px;text-align:center;">Center</div>
<div style="left:754px;top:525px;width:90px;height:20px;background:#6a6a6a"></div>
<div class="n" style="left:754px;top:528px;width:90px;text-align:center;">FS&nbsp;&nbsp;1&nbsp;&nbsp;Ch.&nbsp;3</div>
<div style="left:850px;top:525px;width:90px;height:20px;background:#6a6a6a"></div>
<div class="n" style="left:850px;top:528px;width:90px;text-align:center;">FS&nbsp;&nbsp;2&nbsp;&nbsp;Ch.&nbsp;3</div>
<div style="left:946px;top:525px;width:90px;height:20px;background:#6a6a6a"></div>
<div class="n" style="left:946px;top:528px;width:90px;text-align:center;">FS&nbsp;&nbsp;3&nbsp;&nbsp;Ch.&nbsp;3</div>
<div style="left:1042px;top:525px;width:90px;height:20px;background:#6a6a6a"></div>
<div class="n" style="left:1042px;top:528px;width:90px;text-align:center;">FS&nbsp;&nbsp;4&nbsp;&nbsp;Ch.&nbsp;3</div>
<div style="left:1138px;top:525px;width:90px;height:20px;background:#6a6a6a"></div>
<div class="n" style="left:1138px;top:528px;width:90px;text-align:center;">FS&nbsp;&nbsp;5&nbsp;&nbsp;Ch.&nbsp;3</div>
<div style="left:1234px;top:525px;width:90px;height:20px;background:#6a6a6a"></div>
<div class="n" style="left:1234px;top:528px;width:90px;text-align:center;">FS&nbsp;&nbsp;6&nbsp;&nbsp;Ch.&nbsp;3</div>
<div style="left:1330px;top:525px;width:90px;height:20px;background:#6a6a6a"></div>
<div class="n" style="left:1330px;top:528px;width:90px;text-align:center;">FS&nbsp;&nbsp;7&nbsp;&nbsp;Ch.&nbsp;3</div>
<div style="left:1426px;top:525px;width:90px;height:20px;background:#6a6a6a"></div>
<div class="n" style="left:1426px;top:528px;width:90px;text-align:center;">FS&nbsp;&nbsp;8&nbsp;&nbsp;Ch.&nbsp;3</div>
<div style="left:1522px;top:525px;width:90px;height:20px;background:#6a6a6a"></div>
<div class="n" style="left:1522px;top:528px;width:90px;text-align:center;">FS&nbsp;&nbsp;9&nbsp;&nbsp;Ch.&nbsp;3</div>
<div style="left:1618px;top:525px;width:90px;height:20px;background:#6a6a6a"></div>
<div class="n" style="left:1618px;top:528px;width:90px;text-align:center;">FS&nbsp;10&nbsp;&nbsp;Ch.&nbsp;3</div>
<div class="b ch" style="left:644px;top:552px;width:108px;text-align:center;">Left S</div>
<div style="left:754px;top:549px;width:90px;height:20px;background:#6a6a6a"></div>
<div class="n" style="left:754px;top:552px;width:90px;text-align:center;">FS&nbsp;&nbsp;1&nbsp;&nbsp;Ch.&nbsp;5</div>
<div style="left:850px;top:549px;width:90px;height:20px;background:#6a6a6a"></div>
<div class="n" style="left:850px;top:552px;width:90px;text-align:center;">FS&nbsp;&nbsp;2&nbsp;&nbsp;Ch.&nbsp;5</div>
<div style="left:946px;top:549px;width:90px;height:20px;background:#6a6a6a"></div>
<div class="n" style="left:946px;top:552px;width:90px;text-align:center;">FS&nbsp;&nbsp;3&nbsp;&nbsp;Ch.&nbsp;5</div>
<div style="left:1042px;top:549px;width:90px;height:20px;background:#6a6a6a"></div>
<div class="n" style="left:1042px;top:552px;width:90px;text-align:center;">FS&nbsp;&nbsp;4&nbsp;&nbsp;Ch.&nbsp;5</div>
<div style="left:1138px;top:549px;width:90px;height:20px;background:#6a6a6a"></div>
<div class="n" style="left:1138px;top:552px;width:90px;text-align:center;">FS&nbsp;&nbsp;5&nbsp;&nbsp;Ch.&nbsp;5</div>
<div style="left:1234px;top:549px;width:90px;height:20px;background:#6a6a6a"></div>
<div class="n" style="left:1234px;top:552px;width:90px;text-align:center;">FS&nbsp;&nbsp;6&nbsp;&nbsp;Ch.&nbsp;5</div>
<div style="left:1330px;top:549px;width:90px;height:20px;background:#6a6a6a"></div>
<div class="n" style="left:1330px;top:552px;width:90px;text-align:center;">FS&nbsp;&nbsp;7&nbsp;&nbsp;Ch.&nbsp;5</div>
<div style="left:1426px;top:549px;width:90px;height:20px;background:#6a6a6a"></div>
<div class="n" style="left:1426px;top:552px;width:90px;text-align:center;">FS&nbsp;&nbsp;8&nbsp;&nbsp;Ch.&nbsp;5</div>
<div style="left:1522px;top:549px;width:90px;height:20px;background:#6a6a6a"></div>
<div class="n" style="left:1522px;top:552px;width:90px;text-align:center;">FS&nbsp;&nbsp;9&nbsp;&nbsp;Ch.&nbsp;5</div>
<div style="left:1618px;top:549px;width:90px;height:20px;background:#6a6a6a"></div>
<div class="n" style="left:1618px;top:552px;width:90px;text-align:center;">FS&nbsp;10&nbsp;&nbsp;Ch.&nbsp;5</div>
<div class="b ch" style="left:644px;top:576px;width:108px;text-align:center;">Right S</div>
<div style="left:754px;top:573px;width:90px;height:20px;background:#6a6a6a"></div>
<div class="n" style="left:754px;top:576px;width:90px;text-align:center;">FS&nbsp;&nbsp;1&nbsp;&nbsp;Ch.&nbsp;6</div>
<div style="left:850px;top:573px;width:90px;height:20px;background:#6a6a6a"></div>
<div class="n" style="left:850px;top:576px;width:90px;text-align:center;">FS&nbsp;&nbsp;2&nbsp;&nbsp;Ch.&nbsp;6</div>
<div style="left:946px;top:573px;width:90px;height:20px;background:#6a6a6a"></div>
<div class="n" style="left:946px;top:576px;width:90px;text-align:center;">FS&nbsp;&nbsp;3&nbsp;&nbsp;Ch.&nbsp;6</div>
<div style="left:1042px;top:573px;width:90px;height:20px;background:#6a6a6a"></div>
<div class="n" style="left:1042px;top:576px;width:90px;text-align:center;">FS&nbsp;&nbsp;4&nbsp;&nbsp;Ch.&nbsp;6</div>
<div style="left:1138px;top:573px;width:90px;height:20px;background:#6a6a6a"></div>
<div class="n" style="left:1138px;top:576px;width:90px;text-align:center;">FS&nbsp;&nbsp;5&nbsp;&nbsp;Ch.&nbsp;6</div>
<div style="left:1234px;top:573px;width:90px;height:20px;background:#6a6a6a"></div>
<div class="n" style="left:1234px;top:576px;width:90px;text-align:center;">FS&nbsp;&nbsp;6&nbsp;&nbsp;Ch.&nbsp;6</div>
<div style="left:1330px;top:573px;width:90px;height:20px;background:#6a6a6a"></div>
<div class="n" style="left:1330px;top:576px;width:90px;text-align:center;">FS&nbsp;&nbsp;7&nbsp;&nbsp;Ch.&nbsp;6</div>
<div style="left:1426px;top:573px;width:90px;height:20px;background:#6a6a6a"></div>
<div class="n" style="left:1426px;top:576px;width:90px;text-align:center;">FS&nbsp;&nbsp;8&nbsp;&nbsp;Ch.&nbsp;6</div>
<div style="left:1522px;top:573px;width:90px;height:20px;background:#6a6a6a"></div>
<div class="n" style="left:1522px;top:576px;width:90px;text-align:center;">FS&nbsp;&nbsp;9&nbsp;&nbsp;Ch.&nbsp;6</div>
<div style="left:1618px;top:573px;width:90px;height:20px;background:#6a6a6a"></div>
<div class="n" style="left:1618px;top:576px;width:90px;text-align:center;">FS&nbsp;10&nbsp;&nbsp;Ch.&nbsp;6</div>
<div style="left:761px;top:598px;width:75px;height:22px;background:#6b6b6b;border:1px solid #fafafa"></div>
<div class="b" style="left:761px;top:602px;width:75px;text-align:center;">Assign</div>
<div style="left:857px;top:598px;width:75px;height:22px;background:#6b6b6b;border:1px solid #fafafa"></div>
<div class="b" style="left:857px;top:602px;width:75px;text-align:center;">Assign</div>
<div style="left:953px;top:598px;width:75px;height:22px;background:#6b6b6b;border:1px solid #fafafa"></div>
<div class="b" style="left:953px;top:602px;width:75px;text-align:center;">Assign</div>
<div style="left:1049px;top:598px;width:75px;height:22px;background:#6b6b6b;border:1px solid #fafafa"></div>
<div class="b" style="left:1049px;top:602px;width:75px;text-align:center;">Assign</div>
<div style="left:1145px;top:598px;width:75px;height:22px;background:#6b6b6b;border:1px solid #fafafa"></div>
<div class="b" style="left:1145px;top:602px;width:75px;text-align:center;">Assign</div>
<div style="left:1241px;top:598px;width:75px;height:22px;background:#6b6b6b;border:1px solid #fafafa"></div>
<div class="b" style="left:1241px;top:602px;width:75px;text-align:center;">Assign</div>
<div style="left:1337px;top:598px;width:75px;height:22px;background:#6b6b6b;border:1px solid #fafafa"></div>
<div class="b" style="left:1337px;top:602px;width:75px;text-align:center;">Assign</div>
<div style="left:1433px;top:598px;width:75px;height:22px;background:#6b6b6b;border:1px solid #fafafa"></div>
<div class="b" style="left:1433px;top:602px;width:75px;text-align:center;">Assign</div>
<div style="left:1529px;top:598px;width:75px;height:22px;background:#6b6b6b;border:1px solid #fafafa"></div>
<div class="b" style="left:1529px;top:602px;width:75px;text-align:center;">Assign</div>
<div style="left:1625px;top:598px;width:75px;height:22px;background:#6b6b6b;border:1px solid #fafafa"></div>
<div class="b" style="left:1625px;top:602px;width:75px;text-align:center;">Assign</div>
<div style="left:1144px;top:646px;width:75px;height:23px;background:#6b6b6b;border:1px solid #fafafa"></div>
<div class="b" style="left:1144px;top:650px;width:75px;text-align:center;">Close</div>
</div></body></html>
